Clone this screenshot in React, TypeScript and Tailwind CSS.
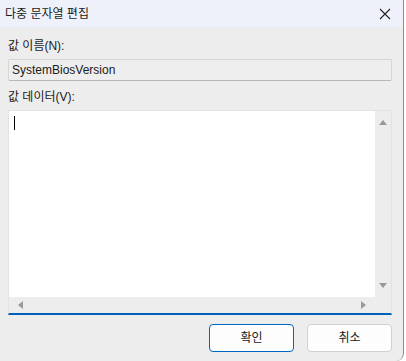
import React from "react";

const font = { fontFamily: '"Liberation Sans", "Noto Sans CJK KR", sans-serif' };

function Tri({ dir }: { dir: "up" | "down" | "left" | "right" }) {
  const pts = {
    up: "0,7 4,2 8,7",
    down: "0,1 4,6 8,1",
    left: "7,0 2,4 7,8",
    right: "1,0 6,4 1,8",
  }[dir];
  return (
    <svg width="8" height="8" viewBox="0 0 8 8">
      <polygon points={pts} fill="#9a9a9a" />
    </svg>
  );
}

export default function App() {
  return (
    <div className="w-[406px] h-[361px] bg-white overflow-hidden" style={font}>
      <div className="w-[404px] h-[361px] bg-[#ededed] border-r border-[#8c8c8c] rounded-br-[8px] flex flex-col">
        {/* Title bar */}
        <div className="h-[27px] bg-[#eef1f9] flex items-center justify-between pl-[5px] pr-[12px]">
          <span className="text-[12px] text-[#1a1a1a] leading-none">다중 문자열 편집</span>
          <svg width="12" height="12" viewBox="0 0 12 12">
            <path d="M1 1 L11 11 M11 1 L1 11" stroke="#222" strokeWidth="1.1" />
          </svg>
        </div>

        <div className="flex-1 pl-[8px] pr-[11px] flex flex-col">
          <div className="h-[32px] flex items-center pt-[6px] text-[12px] text-[#1a1a1a]">값 이름(N):</div>
          <div className="h-[22px] border border-[#d6d6d6] border-b-[#b8b8b8] rounded-[2px] bg-[#eeeeee] flex items-center px-[3px] text-[12px] text-[#1a1a1a]">
            SystemBiosVersion
          </div>
          <div className="h-[29px] flex items-center pt-[2px] text-[12px] text-[#1a1a1a]">값 데이터(V):</div>

          {/* Text area */}
          <div className="h-[205px] border border-[#e3e3e3] border-b-2 border-b-[#005fb8] flex flex-col bg-[#ededed]">
            <div className="flex flex-1">
              <div className="flex-1 bg-white pl-[5px] pt-[5px]">
                <div className="w-px h-[14px] bg-black" />
              </div>
              <div className="w-[16px] flex flex-col items-center justify-between py-[7px]">
                <Tri dir="up" />
                <Tri dir="down" />
              </div>
            </div>
            <div className="h-[16px] flex">
              <div className="flex-1 flex items-center justify-between px-[7px]">
                <Tri dir="left" />
                <Tri dir="right" />
              </div>
              <div className="w-[16px]" />
            </div>
          </div>

          {/* Buttons */}
          <div className="flex justify-end gap-[13px] pt-[9px]">
            <button className="w-[85px] h-[28px] rounded-[4px] border border-[#0067c0] bg-[#fdfdfd] text-[12px] text-[#1a1a1a]">
              확인
            </button>
            <button className="w-[85px] h-[28px] rounded-[4px] border border-[#d0d0d0] bg-[#fdfdfd] text-[12px] text-[#1a1a1a]">
              취소
            </button>
          </div>
        </div>
      </div>
    </div>
  );
}
